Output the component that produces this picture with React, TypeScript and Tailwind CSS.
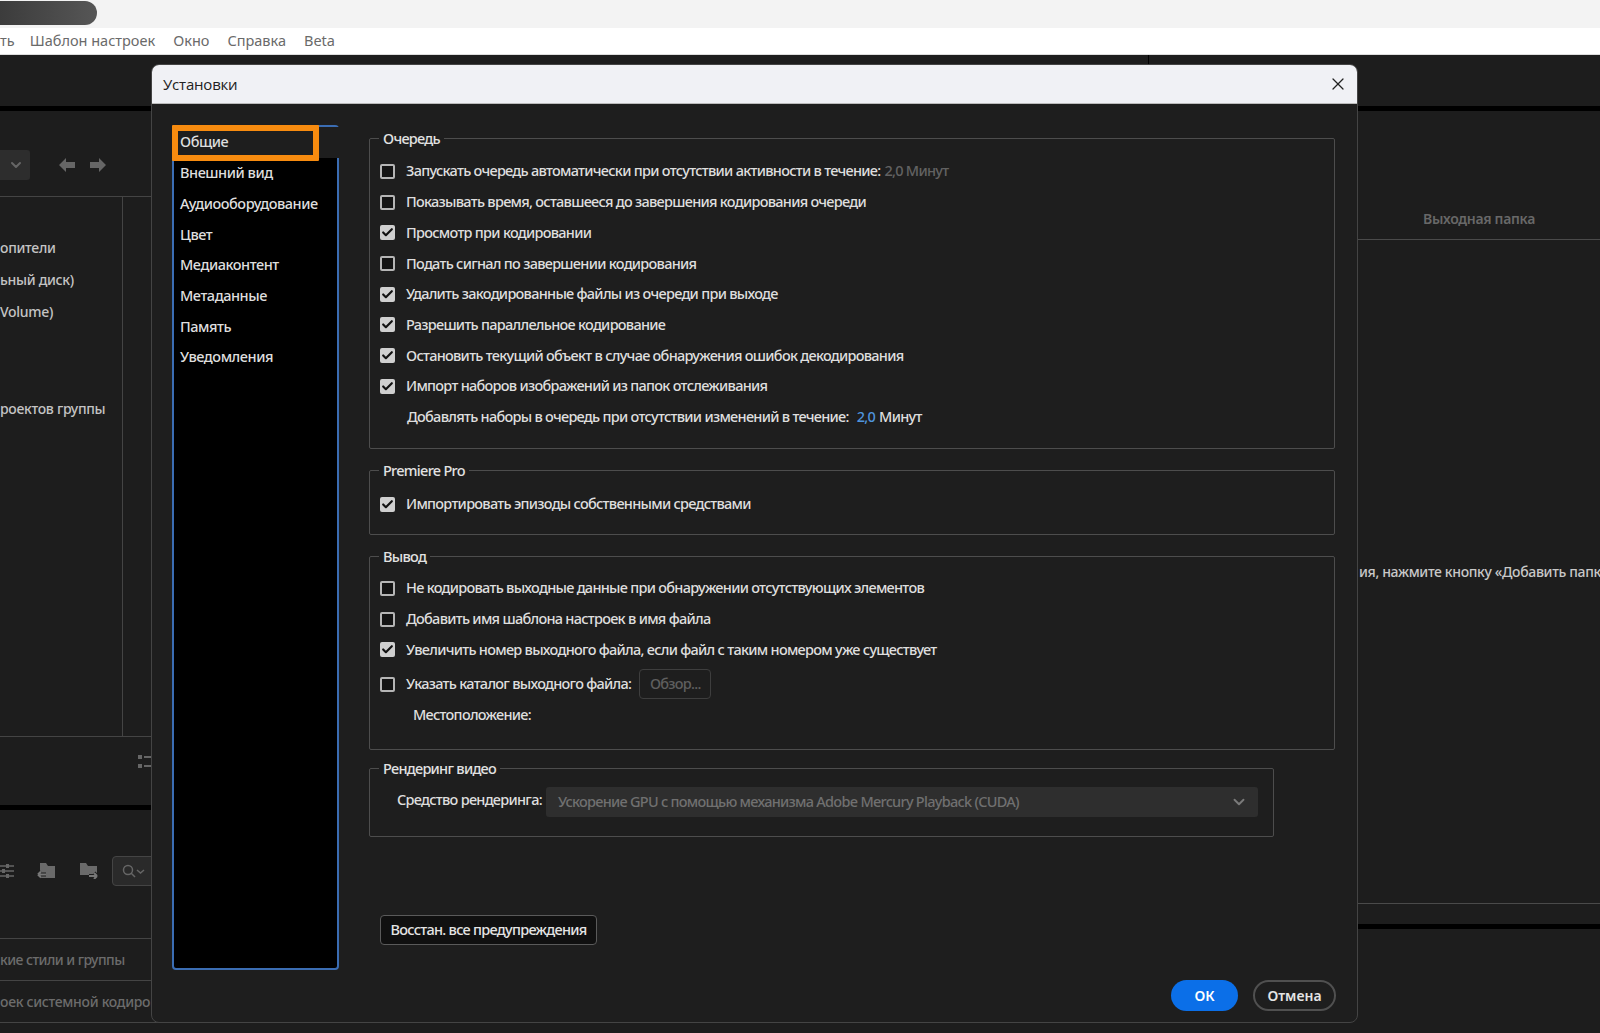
import { X, ChevronDown, Check } from "lucide-react";

const queueRows = [
  { label: "Запускать очередь автоматически при отсутствии активности в течение:", checked: false, suffix: true },
  { label: "Показывать время, оставшееся до завершения кодирования очереди", checked: false },
  { label: "Просмотр при кодировании", checked: true },
  { label: "Подать сигнал по завершении кодирования", checked: false },
  { label: "Удалить закодированные файлы из очереди при выходе", checked: true },
  { label: "Разрешить параллельное кодирование", checked: true },
  { label: "Остановить текущий объект в случае обнаружения ошибок декодирования", checked: true },
  { label: "Импорт наборов изображений из папок отслеживания", checked: true },
];

const outputRows = [
  { label: "Не кодировать выходные данные при обнаружении отсутствующих элементов", checked: false },
  { label: "Добавить имя шаблона настроек в имя файла", checked: false },
  { label: "Увеличить номер выходного файла, если файл с таким номером уже существует", checked: true },
];

const navItems = ["Внешний вид", "Аудиооборудование", "Цвет", "Медиаконтент", "Метаданные", "Память", "Уведомления"];

function Box({ checked }: { checked: boolean }) {
  return checked ? (
    <span className="flex h-[15px] w-[15px] shrink-0 items-center justify-center rounded-[2px] bg-[#cfcfcf]">
      <Check className="h-[13px] w-[13px] text-[#111]" strokeWidth={4} />
    </span>
  ) : (
    <span className="h-[15px] w-[15px] shrink-0 rounded-[2px] border-2 border-[#b5b5b5] bg-[#141414]" />
  );
}

function Row({ label, checked, children }: { label: string; checked: boolean; children?: React.ReactNode }) {
  return (
    <div className="flex h-[30.7px] items-center whitespace-nowrap text-[#dedede]">
      <Box checked={checked} />
      <span className="ml-[11px]">{label}</span>
      {children}
    </div>
  );
}

function Group({ title, className, children }: { title: string; className: string; children: React.ReactNode }) {
  return (
    <fieldset className={`rounded-[2px] border border-[#4d4d4d] px-[10px] ${className}`}>
      <legend className="-ml-px px-1 text-[14.5px] leading-5 text-[#e2e2e2]">{title}</legend>
      {children}
    </fieldset>
  );
}

function ArrowIcon({ flip }: { flip?: boolean }) {
  return (
    <svg width="16" height="14" viewBox="0 0 16 14" className={flip ? "-scale-x-100" : ""}>
      <path d="M0 7 7 0v4h9v6H7v4z" fill="#666" />
    </svg>
  );
}

function FolderOutIcon() {
  return (
    <svg width="18" height="16" viewBox="0 0 18 16">
      <path d="M3 0h6l2 3h7v12H3z" fill="#6a6a6a" />
      <path d="M1 11.5h8M1 11.5l3-3M1 11.5l3 3" stroke="#1d1d1d" strokeWidth="4" fill="none" />
      <path d="M1 11.5h8M1 11.5l3-3M1 11.5l3 3" stroke="#777" strokeWidth="2" fill="none" />
    </svg>
  );
}

function FolderInIcon() {
  return (
    <svg width="18" height="16" viewBox="0 0 18 16">
      <path d="M0 0h6l2 3h9v9H0z" fill="#6a6a6a" />
      <path d="M9 13h8M17 13l-3-3M17 13l-3 3" stroke="#1d1d1d" strokeWidth="4" fill="none" />
      <path d="M9 13h8M17 13l-3-3M17 13l-3 3" stroke="#777" strokeWidth="2" fill="none" />
    </svg>
  );
}

export default function App() {
  return (
    <div className="relative h-[1033px] w-[1600px] overflow-hidden bg-[#1d1d1d] font-['Noto_Sans',sans-serif] text-[14px]">
      {/* title strip */}
      <div className="h-[28px] bg-[#f3f3f3] pt-px">
        <div className="h-[24px] w-[97px] rounded-r-full bg-gradient-to-r from-[#3c3c3c] to-[#565656]" />
      </div>
      {/* menu */}
      <div className="flex h-[27px] items-center gap-[18px] border-b border-[#ddd] bg-white text-[14.5px] text-[#6a6a6a]">
        <span className="-mr-[3px]">ть</span>
        <span>Шаблон настроек</span>
        <span>Окно</span>
        <span>Справка</span>
        <span>Beta</span>
      </div>

      {/* app panels behind the dialog */}
      <div className="flex">
        <div className="w-[300px] shrink-0">
          <div className="h-[51px]" />
          <div className="h-[5px] bg-black" />
          <div className="flex h-[86px] items-center border-b border-[#444] pt-[22px]">
            <div className="flex h-[30px] w-[30px] items-center justify-end rounded-r-[3px] bg-[#2d2d2d] pr-[6px]">
              <ChevronDown className="h-4 w-4 text-[#666]" strokeWidth={3} />
            </div>
            <div className="ml-[29px] flex gap-[15px]">
              <ArrowIcon />
              <ArrowIcon flip />
            </div>
          </div>
          <div className="h-[539px] w-[123px] border-r border-[#444] pt-[40px] font-medium tracking-[-0.3px] whitespace-nowrap text-[#c4c4c4]">
            <div className="h-[32px]">опители</div>
            <div className="h-[32px]">ьный диск)</div>
            <div className="h-[97px]">Volume)</div>
            <div>роектов группы</div>
          </div>
          <div className="flex h-[69px] border-t border-[#444] pl-[138px] pt-[17px]">
            <svg width="14" height="16" viewBox="0 0 14 16">
              <path d="M0 1h4v4H0zM6 2h8v2H6zM0 10h4v4H0zM6 11h8v2H6z" fill="#666" />
            </svg>
          </div>
          <div className="h-[5px] bg-black" />
          <div className="flex h-[128px] items-center pb-[6px]">
            <svg width="14" height="14" viewBox="0 0 14 14" className="mr-[23px]">
              <path d="M0 2h6M9 2h5M0 7h2M5 7h9M0 12h6M9 12h5" stroke="#666" strokeWidth="1.5" />
              <path d="M6 0h3v4H6zM2 5h3v4H2zM6 10h3v4H6z" fill="#666" />
            </svg>
            <FolderOutIcon />
            <span className="w-[25px]" />
            <FolderInIcon />
            <div className="ml-[14px] flex h-[30px] w-[60px] items-center rounded-[4px] border border-[#444] bg-[#2a2a2a] pl-[9px]">
              <svg width="24" height="14" viewBox="0 0 24 14" fill="none" stroke="#666" strokeWidth="1.5">
                <circle cx="6" cy="6" r="4.5" />
                <path d="m9 9 4 4M15 6l3.5 3L22 6" />
              </svg>
            </div>
          </div>
          <div className="flex h-[42px] items-center border-t border-[#444] font-medium tracking-[-0.55px] whitespace-nowrap text-[#6c6c6c]">кие стили и группы</div>
          <div className="flex h-[42px] items-center border-t border-[#444] font-medium tracking-[-0.3px] whitespace-nowrap text-[#6c6c6c]">оек системной кодиров</div>
          <div className="border-t border-[#444]" />
        </div>
        {/* gutters that peek out above and below the dialog */}
        <div className="ml-[623px] mt-[51px] w-[5px] shrink-0 bg-black" />
        <div className="ml-[220px] h-[11px] w-px shrink-0 bg-black" />
        <div className="ml-[208px] w-[243px] shrink-0">
          <div className="h-[51px]" />
          <div className="h-[5px] bg-black" />
          <div className="flex h-[129px] items-end justify-end border-b border-[#4a4a4a] pb-[10px] pr-[65px] font-semibold tracking-[-0.3px] text-[#686868]">
            Выходная папка
          </div>
          <div className="h-[663px] whitespace-nowrap pl-[2px] pt-[321px] font-medium tracking-[-0.35px] text-[#c8c8c8]">
            ия, нажмите кнопку «Добавить папку»
          </div>
          <div className="h-[21px] border-t border-[#4a4a4a]" />
          <div className="h-[5px] bg-black" />
        </div>
      </div>

      {/* dialog */}
      <div className="absolute left-[151px] top-[64px] flex h-[959px] w-[1207px] flex-col overflow-hidden rounded-[8px] border border-[#444] bg-[#1e1e1e]">
        <div className="flex h-[39px] shrink-0 items-center justify-between border-b border-[#bbb] bg-[#f0f1f5] px-[11px] font-['Open_Sans',sans-serif] text-[15px] tracking-[-0.2px] text-[#222]">
          <span>Установки</span>
          <X className="-mr-[2px] h-5 w-5 text-[#222]" strokeWidth={1.5} />
        </div>
        <div className="flex pl-[20px] pt-[21px] text-[14.5px] font-medium tracking-[-0.72px]">
          <div className="relative h-[845px] w-[167px] shrink-0 rounded-[4px] border-2 border-[#3b6db3] bg-black pl-[6px] tracking-[-0.45px] text-[#dedede]">
            <div className="-mx-[6px] flex h-[30.7px] items-center bg-[#1e1e1e] pl-[6px]">Общие</div>
            {navItems.map((item) => (
              <div key={item} className="flex h-[30.7px] items-center">
                {item}
              </div>
            ))}
            {/* orange focus outline */}
            <div className="absolute -left-[2px] -top-[2px] h-[36px] w-[147px] rounded-[1px] border-[6px] border-[#f78b0f]" />
          </div>
          <div className="ml-[30px] w-[967px] pt-[3px]">
            <Group title="Очередь" className="h-[321px] w-[966px] pt-[8px]">
              {queueRows.map((row) => (
                <Row key={row.label} label={row.label} checked={row.checked}>
                  {row.suffix ? <span className="ml-1 text-[#626262]">2,0 Минут</span> : null}
                </Row>
              ))}
              <div className="flex h-[30.7px] items-center whitespace-nowrap pl-[27px] text-[#dedede]">
                Добавлять наборы в очередь при отсутствии изменений в течение:
                <span className="ml-2 text-[#4f94dd]">2,0</span>
                <span className="ml-1">Минут</span>
              </div>
            </Group>
            <Group title="Premiere Pro" className="mt-[11px] h-[75px] w-[966px] pt-[9px]">
              <Row label="Импортировать эпизоды собственными средствами" checked />
            </Group>
            <Group title="Вывод" className="mt-[11px] h-[204px] w-[966px] pt-[7px]">
              {outputRows.map((row) => (
                <Row key={row.label} label={row.label} checked={row.checked} />
              ))}
              <div className="mt-[4px] flex h-[30px] items-center whitespace-nowrap text-[#dedede]">
                <Box checked={false} />
                <span className="ml-[11px]">Указать каталог выходного файла:</span>
                <span className="ml-2 flex h-[30px] w-[72px] items-center justify-center rounded-[4px] border border-[#3e3e3e] text-[#5f5f5f]">
                  Обзор...
                </span>
              </div>
              <div className="flex h-[32px] items-center pl-[33px] text-[#dedede]">Местоположение:</div>
            </Group>
            <Group title="Рендеринг видео" className="mt-[8px] h-[79px] w-[905px] pt-[9px]">
              <div className="flex items-center whitespace-nowrap text-[#dedede]">
                <span className="ml-[17px] -mt-[5px] w-[149px]">Средство рендеринга:</span>
                <div className="flex h-[30px] w-[712px] items-center justify-between rounded-[3px] bg-[#2e2e2e] pl-[12px] pr-[10px] text-[#707070]">
                  Ускорение GPU с помощью механизма Adobe Mercury Playback (CUDA)
                  <ChevronDown className="h-[18px] w-[18px] text-[#7a7a7a]" strokeWidth={2.5} />
                </div>
              </div>
            </Group>
            <button className="ml-[11px] mt-[78px] flex h-[30px] w-[217px] items-center justify-center rounded-[4px] border border-[#5a5a5a] bg-[#101010] text-[#e4e4e4]">
              Восстан. все предупреждения
            </button>
            <div className="mt-[35px] flex justify-end gap-[15px] text-[14px] font-semibold tracking-normal">
              <button className="h-[31px] w-[67px] rounded-full bg-[#0b6fe8] text-white">ОК</button>
              <button className="h-[31px] w-[83px] rounded-full border-2 border-[#505050] text-[#e4e4e4]">Отмена</button>
            </div>
          </div>
        </div>
      </div>
    </div>
  );
}
